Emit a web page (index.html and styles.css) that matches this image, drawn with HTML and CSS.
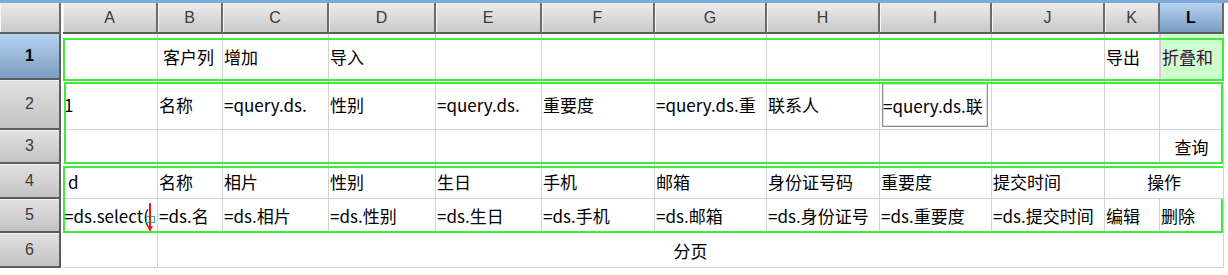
FILE: index.html
```html
<!DOCTYPE html>
<html lang="zh-CN">

<head>
    <meta charset="UTF-8">
    <meta name="viewport" content="width=device-width, initial-scale=1.0">
    <title>报表设计</title>
    <link rel="stylesheet" href="styles.css">
</head>

<body>
    <div class="topbar"></div>
    <div class="sheet">
        <!-- column headers -->
        <div class="corner"></div>
        <div class="col">A</div>
        <div class="col">B</div>
        <div class="col">C</div>
        <div class="col">D</div>
        <div class="col">E</div>
        <div class="col">F</div>
        <div class="col">G</div>
        <div class="col">H</div>
        <div class="col">I</div>
        <div class="col">J</div>
        <div class="col">K</div>
        <div class="col active">L</div>

        <!-- row 1 -->
        <div class="row active">1</div>
        <div class="cell"></div>
        <div class="cell indent">客户列</div>
        <div class="cell">增加</div>
        <div class="cell">导入</div>
        <div class="cell"></div>
        <div class="cell"></div>
        <div class="cell"></div>
        <div class="cell"></div>
        <div class="cell"></div>
        <div class="cell"></div>
        <div class="cell">导出</div>
        <div class="cell fold">折叠和</div>

        <!-- row 2 -->
        <div class="row">2</div>
        <div class="cell">1</div>
        <div class="cell">名称</div>
        <div class="cell">=query.ds.</div>
        <div class="cell">性别</div>
        <div class="cell">=query.ds.</div>
        <div class="cell">重要度</div>
        <div class="cell">=query.ds.重</div>
        <div class="cell">联系人</div>
        <div class="cell current"><span class="cursor">=query.ds.联</span></div>
        <div class="cell"></div>
        <div class="cell"></div>
        <div class="cell"></div>

        <!-- row 3 -->
        <div class="row">3</div>
        <div class="cell"></div>
        <div class="cell"></div>
        <div class="cell"></div>
        <div class="cell"></div>
        <div class="cell"></div>
        <div class="cell"></div>
        <div class="cell"></div>
        <div class="cell"></div>
        <div class="cell"></div>
        <div class="cell"></div>
        <div class="cell"></div>
        <div class="cell center">查询</div>

        <!-- row 4 -->
        <div class="row">4</div>
        <div class="cell indent">d</div>
        <div class="cell">名称</div>
        <div class="cell">相片</div>
        <div class="cell">性别</div>
        <div class="cell">生日</div>
        <div class="cell">手机</div>
        <div class="cell">邮箱</div>
        <div class="cell">身份证号码</div>
        <div class="cell">重要度</div>
        <div class="cell">提交时间</div>
        <div class="cell center span2">操作</div>

        <!-- row 5 -->
        <div class="row">5</div>
        <div class="cell marked">=ds.select(
            <svg class="marker" width="14" height="34" viewBox="0 0 14 34">
                <rect x="2.5" y="16.5" width="8" height="6" fill="none" stroke="#2ab7c4" stroke-width="1" />
                <path d="M6 3 V28" stroke="#f01818" stroke-width="2" />
                <path d="M3 26 L9 26 L6 32 Z" fill="#f01818" />
            </svg>
        </div>
        <div class="cell">=ds.名</div>
        <div class="cell">=ds.相片</div>
        <div class="cell">=ds.性别</div>
        <div class="cell">=ds.生日</div>
        <div class="cell">=ds.手机</div>
        <div class="cell">=ds.邮箱</div>
        <div class="cell">=ds.身份证号</div>
        <div class="cell">=ds.重要度</div>
        <div class="cell">=ds.提交时间</div>
        <div class="cell">编辑</div>
        <div class="cell">删除</div>

        <!-- row 6 -->
        <div class="row">6</div>
        <div class="cell"></div>
        <div class="cell center span11">分页</div>

        <!-- block outlines -->
        <div class="range range1"></div>
        <div class="range range2"></div>
        <div class="range range3"></div>
        <div class="range range3-edge"></div>
    </div>
</body>

</html>
```

FILE: styles.css
```css
* {
    margin: 0;
    padding: 0;
    box-sizing: border-box;
}

body {
    width: 1228px;
    height: 275px;
    background-color: #fff;
    overflow: hidden;
    font-family: "Noto Sans CJK SC", "Liberation Sans", sans-serif;
}

.topbar {
    height: 3px;
    background-color: #80a8d8;
}

.sheet {
    display: grid;
    grid-template-columns: 63px 95px 65px 106px 107px 106px 113px 112px 113px 112px 113px 55px 64px;
    grid-template-rows: 31px 46px 50px 34px 35px 34px 35px;
    position: relative;
}

/* headers */
.corner,
.col,
.row {
    display: flex;
    align-items: center;
    justify-content: center;
    font-family: "Liberation Sans", "DejaVu Sans", sans-serif;
    font-size: 16px;
    color: #3a3a3a;
}

.corner,
.col {
    background-image: linear-gradient(#ececec, #c9c9c9);
    border-right: 2px solid #6a6a6a;
    border-bottom: 2px solid #5c5c5c;
    box-shadow: inset 1px 0 #f6f6f6;
}

.corner {
    margin-right: 2px;
}

.row {
    margin-right: 2px;
    background-image: linear-gradient(#e2e2e2, #c3c3c3);
    border-right: 2px solid #5c5c5c;
    border-bottom: 2px solid #5c5c5c;
    box-shadow: inset 0 1px #f2f2f2;
}

.col.active,
.row.active {
    background-image: linear-gradient(#b6d3ef, #7b9dc4);
    color: #000;
    font-weight: bold;
    box-shadow: none;
}

/* body cells */
.cell {
    display: flex;
    align-items: center;
    padding-left: 1px;
    border-right: 1px solid #d2d2d2;
    border-bottom: 1px solid #d2d2d2;
    font-size: 17px;
    color: #000;
    white-space: nowrap;
    overflow: hidden;
}

.cell.indent {
    padding-left: 5px;
}

.cell.center {
    justify-content: center;
    padding-left: 0;
}

.span2 {
    grid-column: span 2;
}

.span11 {
    grid-column: span 11;
}

.fold {
    background-color: #ccffcc;
    border-left: 1px solid #efb8ef;
    color: #3c0c3c;
}

.current {
    padding: 3px 3px 2px 2px;
    align-items: stretch;
}

.cursor {
    flex: 1;
    display: flex;
    align-items: center;
    border: 1px solid #8e8e8e;
    box-shadow: inset 0 0 0 1px #dcdcdc;
    overflow: hidden;
}

.marked {
    position: relative;
}

.marker {
    position: absolute;
    left: 81px;
    top: 1px;
}

/* green block outlines */
.range {
    position: absolute;
    border: 2px solid #3feb3f;
    pointer-events: none;
}

.range1 {
    grid-column: 2 / 14;
    grid-row: 2 / 3;
    top: 4px;
    bottom: -1px;
    left: 0;
    right: 0;
}

.range2 {
    grid-column: 2 / 14;
    grid-row: 3 / 5;
    top: 2px;
    bottom: 0;
    left: 1px;
    right: 1px;
}

.range3 {
    grid-column: 2 / 14;
    grid-row: 5 / 7;
    top: 2px;
    bottom: 0;
    left: 0;
    right: 1px;
    border-right: none;
}

.range3-edge {
    grid-column: 13 / 14;
    grid-row: 6 / 7;
    top: 0;
    bottom: 0;
    right: 1px;
    width: 2px;
    border: none;
    background-color: #3feb3f;
}
```
